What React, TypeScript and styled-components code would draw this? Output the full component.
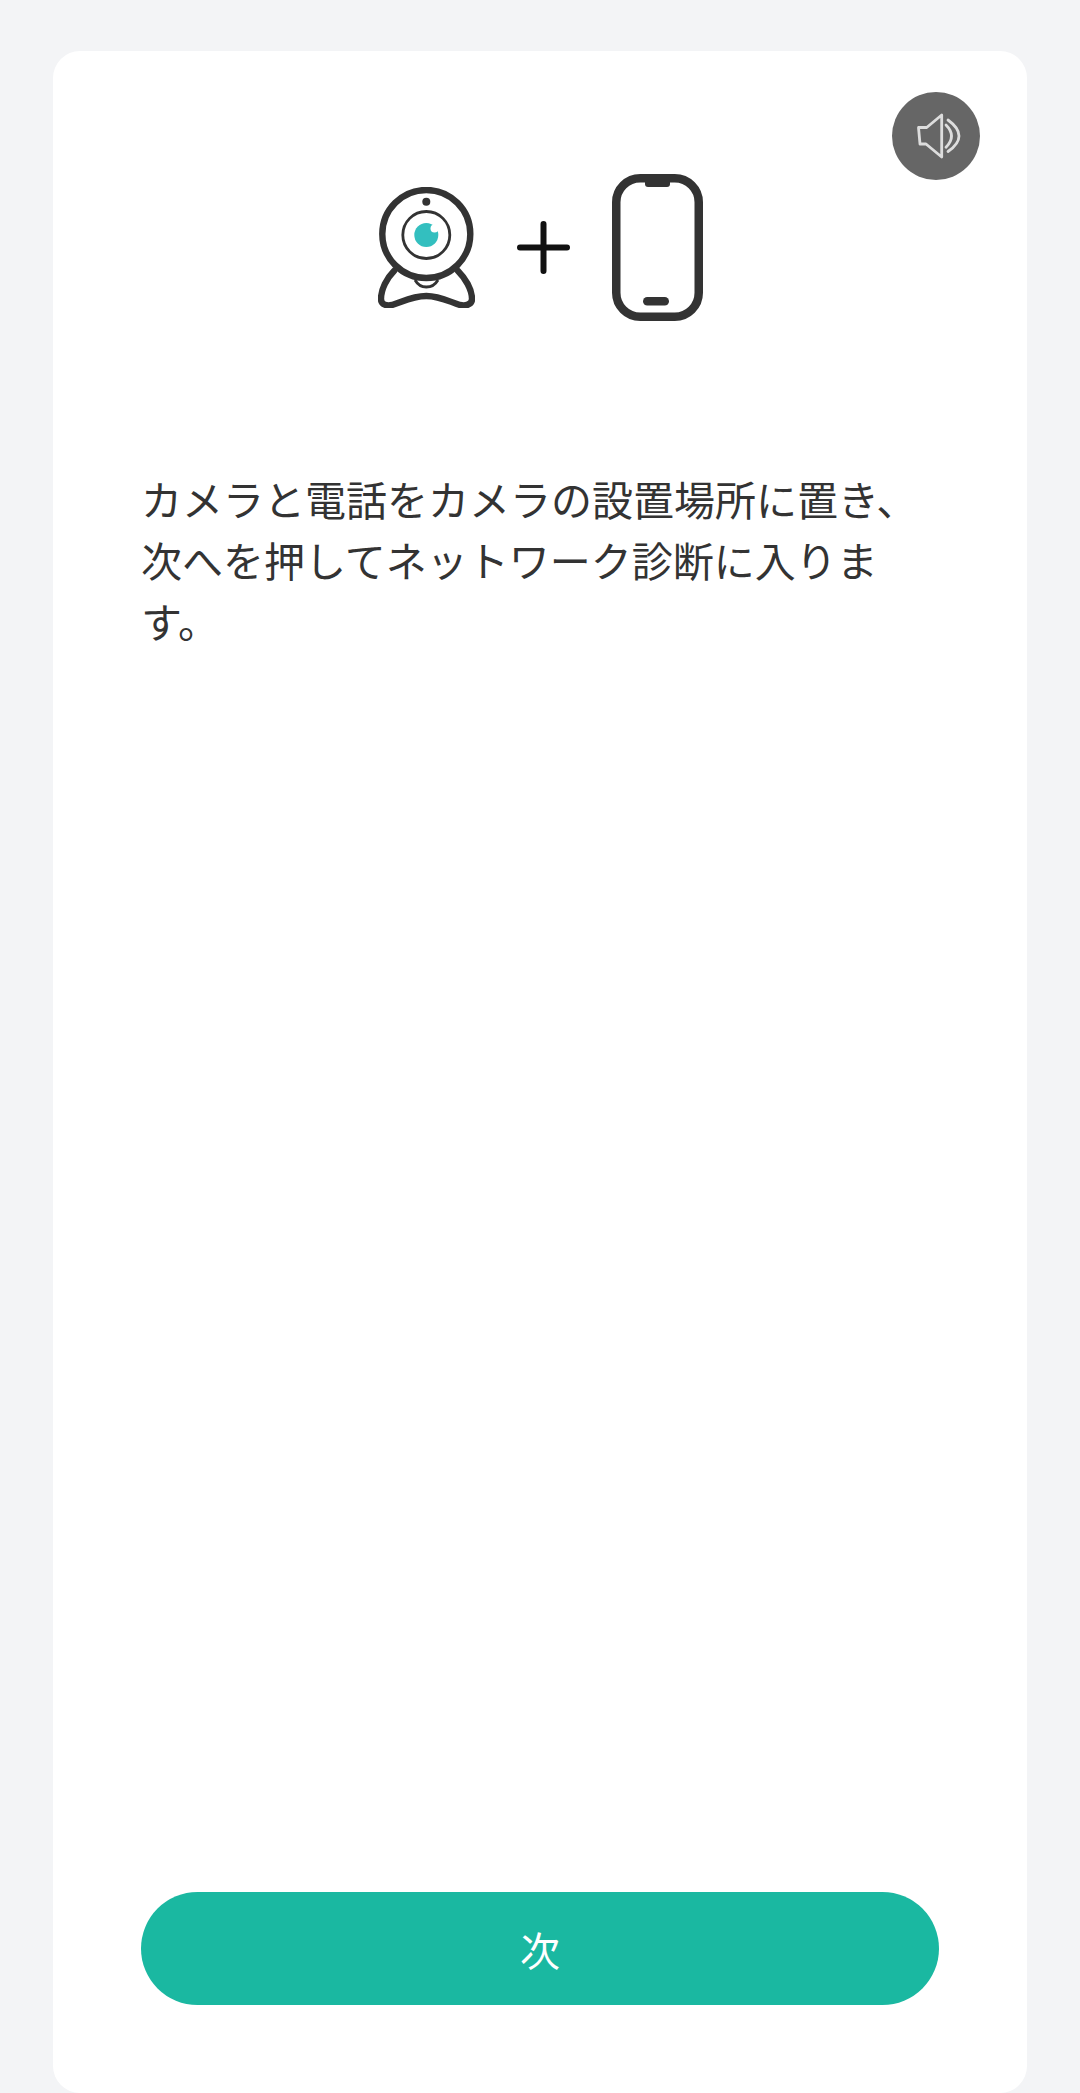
import styled, { createGlobalStyle } from "styled-components";

const GlobalStyle = createGlobalStyle`
  html, body {
    margin: 0;
    padding: 0;
    background-color: #f3f4f6;
  }

  body {
    font-family: "Noto Sans CJK JP", "Noto Sans", sans-serif;
  }
`;

const Page = styled.div`
  box-sizing: border-box;
  height: 2093px;
  padding: 51px 53px 0;
  overflow: hidden;
`;

const Card = styled.main`
  position: relative;
  box-sizing: border-box;
  display: flex;
  flex-direction: column;
  height: 100%;
  padding: 123px 88px 88px;
  border-radius: 27px;
  background-color: #fff;
`;

const SoundButton = styled.button`
  position: absolute;
  top: 41px;
  right: 47px;
  display: flex;
  width: 88px;
  height: 88px;
  padding: 0;
  border: none;
  border-radius: 50%;
  background-color: #666;
`;

const Hero = styled.div`
  display: flex;
  align-items: center;
  justify-content: center;
  column-gap: 42px;
`;

const Message = styled.p`
  margin: 147px 0 0;
  color: #333;
  font-size: 41px;
  line-height: 61px;
`;

const NextButton = styled.button`
  width: 100%;
  height: 113px;
  margin-top: auto;
  border: none;
  border-radius: 57px;
  background-color: #1ab8a1;
  color: #fff;
  font-family: inherit;
  font-size: 40px;
`;

const SpeakerIcon = () => (
  <svg width="88" height="88" viewBox="0 0 88 88" fill="none" stroke="#ddd" strokeWidth="2.8">
    <path d="M26.5 35.5H34.7L49.7 23V65L34 52H28Z" strokeLinejoin="round" />
    <path d="M54 33Q65 44 54 55.3" strokeLinecap="round" />
    <path d="M56 28Q78 44 56 59.5" strokeLinecap="round" />
  </svg>
);

const WebcamIcon = () => (
  <svg width="97" height="121" viewBox="0 0 97 121" fill="none" stroke="#333">
    <path
      d="M16 84C9 91 3 102 3 112C3 118 9 119 14 118C24 115 34 109 48.3 109C62 109 72 115 82 118C87 119 94 118 94 112C94 102 87 91 80 84"
      strokeWidth="6.4"
      strokeLinecap="round"
    />
    <path d="M37 93Q41 100 48.3 100Q56 100 60 93" strokeWidth="2.8" />
    <circle cx="48.3" cy="47" r="44" fill="#fff" strokeWidth="6.4" />
    <circle cx="48.3" cy="48" r="23.5" strokeWidth="2.8" />
    <circle cx="48.3" cy="48" r="12" fill="#33bfbf" stroke="none" />
    <circle cx="56.5" cy="41.5" r="4" fill="#fff" stroke="none" />
    <circle cx="48.3" cy="14.7" r="4" fill="#333" stroke="none" />
  </svg>
);

const PlusIcon = () => (
  <svg width="53" height="53" viewBox="0 0 53 53" stroke="#111" strokeWidth="6" strokeLinecap="round">
    <path d="M26.5 3V50M3 26.5H50" />
  </svg>
);

const PhoneIcon = () => (
  <svg width="91" height="147" viewBox="0 0 91 147" fill="none">
    <rect x="4.25" y="4.25" width="82.5" height="138.5" rx="24" stroke="#333" strokeWidth="8.5" />
    <path d="M33 6H58V10Q58 13 55 13H36Q33 13 33 10Z" fill="#333" />
    <rect x="31" y="123" width="26" height="8.5" rx="4.25" fill="#333" />
  </svg>
);

export default function App() {
  return (
    <>
      <GlobalStyle />
      <Page>
        <Card>
          <SoundButton aria-label="音声">
            <SpeakerIcon />
          </SoundButton>
          <Hero>
            <WebcamIcon />
            <PlusIcon />
            <PhoneIcon />
          </Hero>
          <Message>カメラと電話をカメラの設置場所に置き、次へを押してネットワーク診断に入ります。</Message>
          <NextButton>次</NextButton>
        </Card>
      </Page>
    </>
  );
}
